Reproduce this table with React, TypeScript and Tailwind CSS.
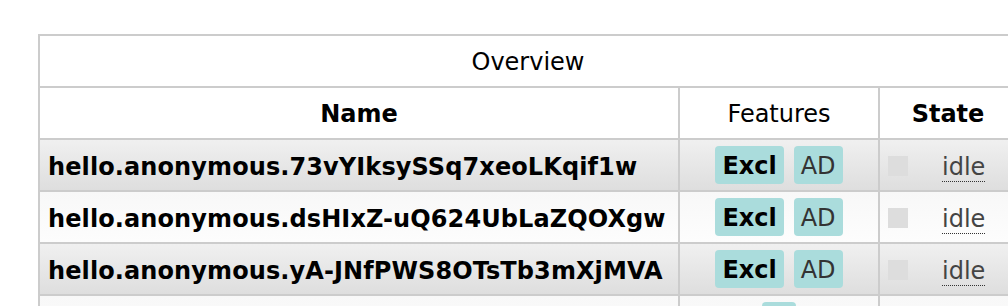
import React from "react";

type Row = { name: string; features: { label: string; bold?: boolean }[]; shaded: boolean };

const rows: Row[] = [
  {
    name: "hello.anonymous.73vYIksySSq7xeoLKqif1w",
    features: [{ label: "Excl", bold: true }, { label: "AD" }],
    shaded: true,
  },
  {
    name: "hello.anonymous.dsHIxZ-uQ624UbLaZQOXgw",
    features: [{ label: "Excl", bold: true }, { label: "AD" }],
    shaded: false,
  },
  {
    name: "hello.anonymous.yA-JNfPWS8OTsTb3mXjMVA",
    features: [{ label: "Excl", bold: true }, { label: "AD" }],
    shaded: true,
  },
];

function Badge({ label, bold }: { label: string; bold?: boolean }) {
  return (
    <span
      className={
        "flex h-[38px] items-center rounded-[4px] bg-[#aadcdc] px-[7px] pt-[1px] text-[24px] " +
        (bold ? "font-bold text-black" : "text-[#333]")
      }
    >
      {label}
    </span>
  );
}

function DataRow({ row }: { row: Row }) {
  return (
    <div
      className={
        "flex h-[52px] border-b-2 border-[#cccccc] " +
        (row.shaded ? "bg-gradient-to-b from-[#f0f0f0] to-[#dedede]" : "bg-gradient-to-b from-[#f8f8f8] to-[#fdfdfd]")
      }
    >
      <div className="flex w-[640px] items-center border-r-2 border-[#cccccc] pl-[8px] pt-[3px] text-[24px] font-bold tracking-[0.1px] text-black">
        {row.name}
      </div>
      <div className="flex w-[200px] items-center justify-center gap-[10px] border-r-2 border-[#cccccc]">
        {row.features.map((f) => (
          <Badge key={f.label} label={f.label} bold={f.bold} />
        ))}
      </div>
      <div className="flex flex-1 items-center pl-[8px]">
        <span className="mt-[1px] h-[20px] w-[20px] bg-[#dddddd]" />
        <abbr
          title="idle"
          className="ml-[34px] mt-[4px] border-b border-dotted border-[#333] text-[24px] leading-[28px] text-[#444] no-underline"
        >
          idle
        </abbr>
      </div>
    </div>
  );
}

export default function App() {
  return (
    <div className="h-[306px] w-[1008px] overflow-hidden bg-white pl-[38px] pt-[34px] font-['DejaVu_Sans',sans-serif]">
      <div className="w-[980px] border-2 border-[#cccccc]">
        <div className="flex h-[52px] items-center justify-center border-b-2 border-[#cccccc] pt-[2px] text-[24px] text-black">
          Overview
        </div>
        <div className="flex h-[52px] border-b-2 border-[#cccccc] bg-white text-[24px] text-black">
          <div className="flex w-[640px] items-center justify-center border-r-2 border-[#cccccc] pt-[2px] font-bold">
            Name
          </div>
          <div className="flex w-[200px] items-center justify-center border-r-2 border-[#cccccc] pt-[2px]">
            Features
          </div>
          <div className="flex flex-1 items-center justify-center pt-[2px] font-bold">State</div>
        </div>
        {rows.map((r) => (
          <DataRow key={r.name} row={r} />
        ))}
        <div className="flex h-[52px] bg-gradient-to-b from-[#f8f8f8] to-[#fdfdfd]">
          <div className="w-[640px] border-r-2 border-[#cccccc]" />
          <div className="flex w-[200px] justify-center border-r-2 border-[#cccccc] pt-[6px]">
            <span className="h-[38px] w-[34px] rounded-[4px] bg-[#aadcdc]" />
          </div>
          <div className="flex-1" />
        </div>
      </div>
    </div>
  );
}
